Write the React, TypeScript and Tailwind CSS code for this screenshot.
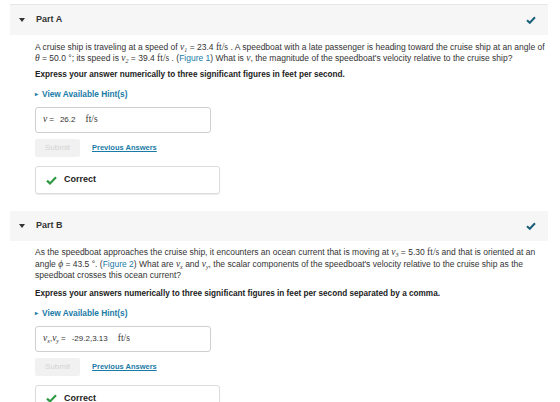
const sans = { fontFamily: '"Liberation Sans", Arial, sans-serif' };

const HeaderCheck = () => (
  <svg width="10" height="8" viewBox="0 0 10 8" className="shrink-0">
    <path d="M1 4.2 L3.8 6.8 L9 1.2" fill="none" stroke="#1b5f7a" strokeWidth="2" />
  </svg>
);

const GreenCheck = () => (
  <svg width="11" height="9" viewBox="0 0 11 9" className="shrink-0">
    <path d="M1 4.6 L4 7.4 L10 1.2" fill="none" stroke="#2f9a43" strokeWidth="2.2" />
  </svg>
);

const Sub = ({ children }: { children: React.ReactNode }) => (
  <span className="relative top-[2px] text-[6px] italic leading-none" style={{ fontFamily: '"Liberation Serif", serif' }}>{children}</span>
);

const M = ({ children }: { children: React.ReactNode }) => (
  <span className="italic text-[9.5px] leading-none" style={{ fontFamily: '"Liberation Serif", serif' }}>{children}</span>
);

const Unit = ({ children }: { children: React.ReactNode }) => (
  <span className="text-[9.5px] leading-none" style={{ fontFamily: '"Liberation Serif", serif' }}>{children}</span>
);

function PartHeader({ title }: { title: string }) {
  return (
    <div className="h-[30px] bg-[#f6f6f6] flex items-center pl-[9px] pr-[12px]">
      <span className="w-0 h-0 border-l-[3.5px] border-r-[3.5px] border-t-[4px] border-l-transparent border-r-transparent border-t-[#333]" />
      <span className="ml-[11px] text-[9px] font-bold text-[#333]">{title}</span>
      <span className="ml-auto"><HeaderCheck /></span>
    </div>
  );
}

function AnswerBlock({ label, value }: { label: React.ReactNode; value: string }) {
  return (
    <>
      <div className="flex items-center gap-[4px] mt-[9px] text-[8.3px] font-bold text-[#1a7ba6] leading-[11px]">
        <span className="text-[6px]">▸</span>
        <span>View Available Hint(s)</span>
      </div>
      <div className="mt-[7px] w-[176px] h-[26px] border border-[#cfcfcf] rounded-[3px] flex items-center pl-[7px] text-[8px] text-[#333]">
        {label}
        <span className="ml-[6px]">{value}</span>
        <span className="ml-[10px]"><Unit>ft/s</Unit></span>
      </div>
      <div className="mt-[6px] flex items-center">
        <div className="w-[45px] h-[18px] bg-[#f1f1f1] rounded-[2px] flex items-center justify-center text-[8px] text-[#d4d4d4]">Submit</div>
        <span className="ml-[12px] text-[7.5px] font-bold text-[#1a7ba6] underline">Previous Answers</span>
      </div>
      <div className="mt-[9px] w-[185px] h-[28px] border border-[#dcdcdc] rounded-[3px] shadow-[0_1px_1px_rgba(0,0,0,0.08)] flex items-center pl-[10px]">
        <GreenCheck />
        <span className="ml-[7px] text-[9px] font-bold text-[#222]">Correct</span>
      </div>
    </>
  );
}

export default function App() {
  return (
    <div className="w-[560px] h-[402px] bg-white overflow-hidden pt-[4px]" style={sans}>
      <div className="ml-[10px] w-[538px] border-t border-[#e6e6e6]">
        <PartHeader title="Part A" />
        <div className="pl-[25px] pt-[7px]">
          <p className="text-[8.5px] leading-[11px] text-[#333]">
            A cruise ship is traveling at a speed of <M>v</M><Sub>1</Sub> = 23.4 <Unit>ft/s</Unit> . A speedboat with a late passenger is heading toward the cruise ship at an angle of{' '}
            <M>θ</M> = 50.0 °; its speed is <M>v</M><Sub>2</Sub> = 39.4 <Unit>ft/s</Unit> . (<span className="text-[#1a7ba6]">Figure 1</span>) What is <M>v</M>, the magnitude of the speedboat's velocity relative to the cruise ship?
          </p>
          <p className="mt-[5px] text-[8.2px] leading-[11px] font-bold text-[#222]">Express your answer numerically to three significant figures in feet per second.</p>
          <AnswerBlock label={<><M>v</M><span className="ml-[2px]">=</span></>} value="26.2" />
        </div>

        <div className="mt-[17px]">
          <PartHeader title="Part B" />
        </div>
        <div className="pl-[25px] pt-[6px]">
          <p className="text-[8.5px] leading-[11.5px] text-[#333]">
            As the speedboat approaches the cruise ship, it encounters an ocean current that is moving at <M>v</M><Sub>3</Sub> = 5.30 <Unit>ft/s</Unit> and that is oriented at an angle <M>ϕ</M> = 43.5 °. (<span className="text-[#1a7ba6]">Figure 2</span>) What are <M>v</M><Sub>x</Sub> and <M>v</M><Sub>y</Sub>, the scalar components of the speedboat's velocity relative to the cruise ship as the speedboat crosses this ocean current?
          </p>
          <p className="mt-[6px] text-[8.2px] leading-[11px] font-bold text-[#222]">Express your answers numerically to three significant figures in feet per second separated by a comma.</p>
          <AnswerBlock
            label={<><M>v</M><Sub>x</Sub>,<M>v</M><Sub>y</Sub><span className="ml-[2px]">=</span></>}
            value="-29.2,3.13"
          />
        </div>
      </div>
    </div>
  );
}
